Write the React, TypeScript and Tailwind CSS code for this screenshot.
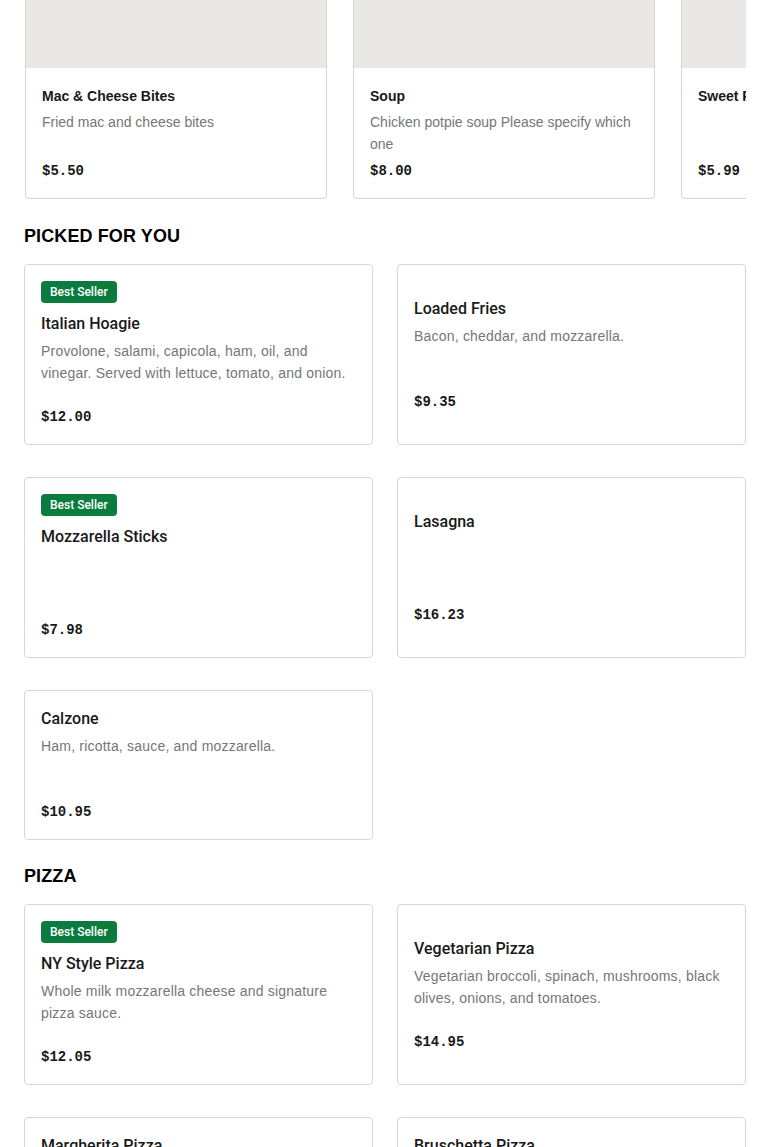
import React from 'react'

type Item = { name: string; desc?: string; price: string; best?: boolean }

const featured: Item[] = [
  { name: 'Mac & Cheese Bites', desc: 'Fried mac and cheese bites', price: '$5.50' },
  { name: 'Soup', desc: 'Chicken potpie soup Please specify which one', price: '$8.00' },
  { name: 'Sweet Potato Fries', price: '$5.99' },
]

const sections: { title: string; items: Item[] }[] = [
  {
    title: 'PICKED FOR YOU',
    items: [
      {
        name: 'Italian Hoagie',
        desc: 'Provolone, salami, capicola, ham, oil, and vinegar. Served with lettuce, tomato, and onion.',
        price: '$12.00',
        best: true,
      },
      { name: 'Loaded Fries', desc: 'Bacon, cheddar, and mozzarella.', price: '$9.35' },
      { name: 'Mozzarella Sticks', price: '$7.98', best: true },
      { name: 'Lasagna', price: '$16.23' },
      { name: 'Calzone', desc: 'Ham, ricotta, sauce, and mozzarella.', price: '$10.95' },
    ],
  },
  {
    title: 'PIZZA',
    items: [
      {
        name: 'NY Style Pizza',
        desc: 'Whole milk mozzarella cheese and signature pizza sauce.',
        price: '$12.05',
        best: true,
      },
      {
        name: 'Vegetarian Pizza',
        desc: 'Vegetarian broccoli, spinach, mushrooms, black olives, onions, and tomatoes.',
        price: '$14.95',
      },
      { name: 'Margherita Pizza', desc: 'Fresh mozzarella, tomato, and basil.', price: '$13.50' },
      { name: 'Bruschetta Pizza', desc: 'Tomato, garlic, basil, and olive oil.', price: '$14.50' },
    ],
  },
]

const sans = "font-['Liberation_Sans',Arial,sans-serif]"
const medium = "font-['Roboto','Liberation_Sans',Arial,sans-serif]"
const mono = "font-['Liberation_Mono','Courier_New',monospace]"

function FeaturedCard({ item }: { item: Item }) {
  return (
    <div className="flex w-[302px] shrink-0 flex-col rounded-b border border-t-0 border-[#d6d6d6] bg-white">
      <div className="h-[68px] bg-[#e9e8e5]" />
      <div className="flex flex-col px-4 pt-[18px] pb-[17px]">
        <div className="text-[14px] leading-5 font-bold text-[#191919]">{item.name}</div>
        <p className="mt-[5px] h-[44px] text-[14px] leading-[22px] text-[#767676]">{item.desc}</p>
        <div className={`${mono} mt-[6px] text-[14px] leading-5 font-bold text-[#191919]`}>
          {item.price}
        </div>
      </div>
    </div>
  )
}

function MenuCard({ item }: { item: Item }) {
  return (
    <div className="flex flex-col justify-center rounded border border-[#d6d6d6] bg-white px-4 py-4">
      {item.best && (
        <span
          className={`${medium} mb-[9px] self-start rounded bg-[#0a7c3e] px-[9px] text-[12px] leading-[22px] font-medium text-white`}
        >
          Best Seller
        </span>
      )}
      <div className={`${medium} text-[16px] leading-6 font-medium text-[#191919]`}>{item.name}</div>
      <p className="mt-1 h-[44px] overflow-hidden text-[14px] leading-[22px] tracking-[0.2px] text-[#767676]">
        {item.desc}
      </p>
      <div className={`${mono} mt-[22px] text-[14px] leading-[22px] font-bold text-[#191919]`}>
        {item.price}
      </div>
    </div>
  )
}

export default function App() {
  return (
    <div className={`${sans} h-[1147px] overflow-hidden bg-white px-6`}>
      <div className="flex gap-[26px] overflow-hidden pl-px">
        {featured.map((item) => (
          <FeaturedCard key={item.name} item={item} />
        ))}
      </div>

      {sections.map((section, i) => (
        <section key={section.title} className={i === 0 ? 'mt-[25px]' : 'mt-[24px]'}>
          <h2 className="text-[18px] leading-6 font-bold tracking-[0.1px] text-black">
            {section.title}
          </h2>
          <div className="mt-4 grid grid-cols-2 gap-x-6 gap-y-8">
            {section.items.map((item) => (
              <MenuCard key={item.name} item={item} />
            ))}
          </div>
        </section>
      ))}
    </div>
  )
}
